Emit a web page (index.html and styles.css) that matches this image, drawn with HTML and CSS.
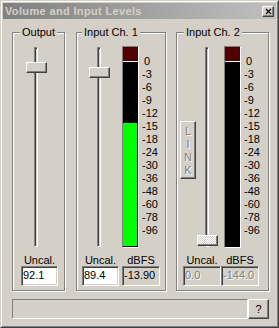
FILE: index.html
```html
<!DOCTYPE html>
<html>
<head>
<meta charset="utf-8">
<title>Volume and Input Levels</title>
<link rel="stylesheet" href="styles.css">
</head>
<body>
<div class="window">
  <div class="frame">
    <div class="titlebar">
      <span class="title">Volume and Input Levels</span>
      <div class="close raised">
        <svg width="9" height="9" viewBox="0 0 9 9"><path d="M2 2 L7 7 M7 2 L2 7" stroke="#000" stroke-width="1.2" fill="none"/></svg>
      </div>
    </div>
    <div class="client">
      <div class="groups">
        <div class="group g-out">
          <span class="legend">Output</span>
          <div class="top">
            <div class="slider s-out">
              <div class="track"></div>
              <div class="thumb raised" style="top:15px"></div>
            </div>
          </div>
          <div class="bottom b-out">
            <div class="field">
              <span class="lbl">Uncal.</span>
              <div class="edit w37">92.1</div>
            </div>
          </div>
        </div>

        <div class="group g-ch1">
          <span class="legend legend-tight">Input Ch. 1</span>
          <div class="top">
            <div class="slider s-ch1">
              <div class="track"></div>
              <div class="thumb raised" style="top:20px"></div>
            </div>
            <div class="meter m-ch1">
              <div class="clip"></div>
              <div class="fill" style="height:123px"></div>
            </div>
            <div class="scale">
              <div class="zero">0</div><div>-3</div><div>-6</div><div>-9</div><div>-12</div><div>-15</div><div>-18</div><div>-24</div><div>-30</div><div>-36</div><div>-48</div><div>-60</div><div>-78</div><div>-96</div>
            </div>
          </div>
          <div class="bottom b-ch1">
            <div class="field">
              <span class="lbl">Uncal.</span>
              <div class="edit w37">89.4</div>
            </div>
            <div class="field f-gap3">
              <span class="lbl">dBFS</span>
              <div class="edit w38 readonly">-13.90</div>
            </div>
          </div>
        </div>

        <div class="group g-ch2">
          <span class="legend">Input Ch. 2</span>
          <div class="top">
            <div class="link raised">
              <span>L</span><span>I</span><span>N</span><span>K</span>
            </div>
            <div class="slider s-ch2">
              <div class="track"></div>
              <div class="thumb raised hatched" style="top:188px"></div>
            </div>
            <div class="meter m-ch2">
              <div class="clip"></div>
            </div>
            <div class="scale">
              <div class="zero">0</div><div>-3</div><div>-6</div><div>-9</div><div>-12</div><div>-15</div><div>-18</div><div>-24</div><div>-30</div><div>-36</div><div>-48</div><div>-60</div><div>-78</div><div>-96</div>
            </div>
          </div>
          <div class="bottom b-ch2">
            <div class="field">
              <span class="lbl">Uncal.</span>
              <div class="edit w38 disabled">0.0</div>
            </div>
            <div class="field f-gap1">
              <span class="lbl">dBFS</span>
              <div class="edit w38 disabled">-144.0</div>
            </div>
          </div>
        </div>
      </div>

      <div class="statusrow">
        <div class="status"></div>
        <div class="help raised">?</div>
      </div>
    </div>
  </div>
</div>
</body>
</html>
```

FILE: styles.css
```css
* { box-sizing: border-box; }

body {
  margin: 0;
  background: #d4d0c8;
  font-family: "Liberation Sans", Arial, sans-serif;
  font-size: 11px;
  color: #000;
}

.window {
  width: 279px;
  height: 328px;
  border: 1px solid;
  border-color: #d4d0c8 #404040 #404040 #d4d0c8;
  background: #d4d0c8;
}

.frame {
  height: 100%;
  border: 1px solid;
  border-color: #fff #808080 #808080 #fff;
  padding: 1px;
  display: flex;
  flex-direction: column;
}

.titlebar {
  height: 16px;
  display: flex;
  align-items: center;
  padding-left: 2px;
  background: linear-gradient(to right, #808080, #c0c0c0);
}

.title {
  flex: 1;
  font-weight: bold;
  color: #d4d0c8;
  line-height: 16px;
  letter-spacing: 0.35px;
  white-space: nowrap;
}

.raised {
  background: #d4d0c8;
  border: 1px solid;
  border-color: #fff #404040 #404040 #fff;
  box-shadow: inset -1px -1px #808080;
}

.close {
  width: 12px;
  height: 11px;
  margin-right: 2px;
  display: flex;
  align-items: center;
  justify-content: center;
}

.close svg { display: block; }

.client {
  padding: 13px 7px 0 9px;
}

.groups {
  display: flex;
}

.group {
  position: relative;
  height: 259px;
  border: 1px solid #808080;
  box-shadow: inset 1px 1px #fff, 1px 1px #fff;
}

.g-out { width: 53px; }
.g-ch1 { width: 90px; margin-left: 11px; }
.g-ch2 { width: 93px; margin-left: 10px; }

.legend {
  position: absolute;
  top: -7px;
  left: 7px;
  padding: 0 2px;
  line-height: 13px;
  background: #d4d0c8;
  white-space: nowrap;
}

.legend-tight { left: 5px; }

.top {
  display: flex;
  align-items: flex-start;
  height: 202px;
  margin-top: 13px;
}

.slider {
  position: relative;
  width: 21px;
  height: 200px;
  margin-top: 1px;
}

.s-out { margin-left: 13px; }
.s-ch1 { margin-left: 12px; }
.s-ch2 { margin-left: 1px; }

.track {
  width: 4px;
  height: 200px;
  margin-left: 8px;
  border: 1px solid;
  border-color: #808080 #fff #fff #808080;
  background: #d4d0c8;
  box-shadow: inset 1px 1px #404040;
}

.thumb {
  position: absolute;
  left: 0;
  width: 21px;
  height: 11px;
}

.hatched {
  background-color: #fff;
  background-image: repeating-conic-gradient(#fff 0 25%, #d4d0c8 0 50%);
  background-size: 2px 2px;
}

.meter {
  width: 17px;
  height: 202px;
  border: 1px solid;
  border-color: #808080 #fff #fff #808080;
  background: #000;
  display: flex;
  flex-direction: column;
}

.m-ch1 { margin-left: 12px; }
.m-ch2 { margin-left: 6px; }

.clip {
  height: 15px;
  background: #500000;
  border-bottom: 1px solid #fff;
}

.fill {
  margin-top: auto;
  margin-right: 1px;
  margin-bottom: 1px;
  background: #00ff00;
}

.scale {
  margin-left: 3px;
  margin-top: 9px;
  line-height: 13px;
}

.scale .zero { padding-left: 2px; }

.link {
  width: 16px;
  height: 58px;
  margin-top: 75px;
  margin-left: 3px;
  padding-top: 3px;
  display: flex;
  flex-direction: column;
  align-items: center;
  line-height: 13px;
  color: #808080;
  text-shadow: 1px 1px #fff;
}

.bottom {
  display: flex;
  margin-top: 7px;
}

.b-out { padding-left: 8px; }
.b-ch1 { padding-left: 5px; }
.b-ch2 { padding-left: 6px; }

.field {
  display: flex;
  flex-direction: column;
  align-items: center;
}

.f-gap3 { margin-left: 3px; }
.f-gap1 { margin-left: 0; }

.lbl {
  line-height: 11px;
  white-space: nowrap;
}

.edit {
  height: 20px;
  padding-left: 1px;
  line-height: 17px;
  background: #fff;
  border: 1px solid;
  border-color: #808080 #fff #fff #808080;
  box-shadow: inset 1px 1px #404040, inset -1px -1px #d4d0c8;
  white-space: nowrap;
  overflow: hidden;
  align-self: stretch;
}

.w37 { width: 37px; }
.w38 { width: 38px; }

.readonly { background: #d4d0c8; }

.disabled {
  background: #d4d0c8;
  color: #808080;
  text-shadow: 1px 1px #fff;
}

.statusrow {
  display: flex;
  margin-top: 8px;
}

.status {
  width: 236px;
  height: 20px;
  border: 1px solid;
  border-color: #808080 #fff #fff #808080;
}

.help {
  width: 21px;
  height: 20px;
  text-align: center;
  line-height: 18px;
}
```
